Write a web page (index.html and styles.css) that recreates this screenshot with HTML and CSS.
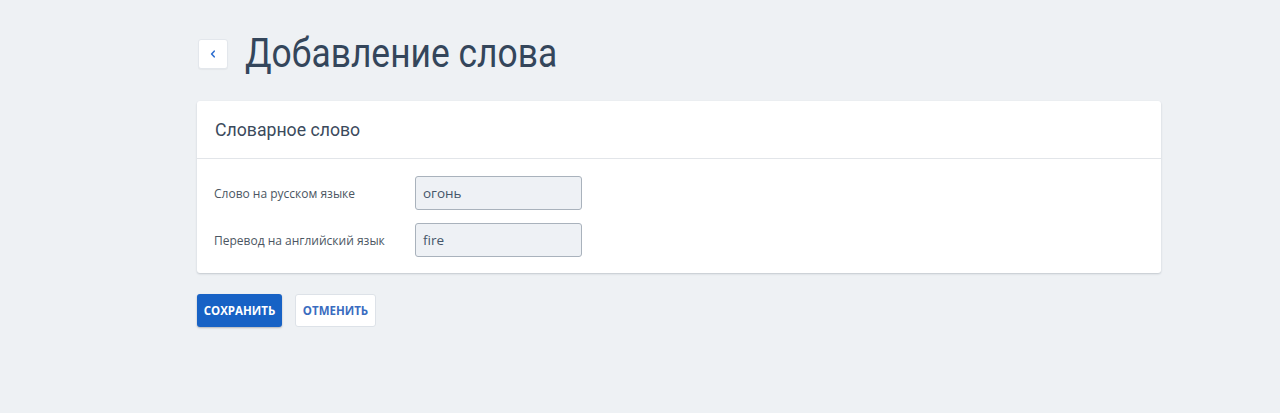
FILE: index.html
```html
<!DOCTYPE html>
<html lang="ru">
<head>
<meta charset="utf-8">
<title>Добавление слова</title>
<link rel="stylesheet" href="styles.css">
</head>
<body>
<div class="page">
  <div class="head">
    <button class="back" type="button" aria-label="Назад">
      <svg width="10" height="10" viewBox="0 0 10 10"><path d="M6.2 2.2 3.6 5l2.6 2.8" fill="none" stroke="#2f6fd0" stroke-width="1.6" stroke-linecap="round" stroke-linejoin="round"/></svg>
    </button>
    <h1 class="title"><span>Добавление слова</span></h1>
  </div>
  <div class="card">
    <div class="card-head"><span>Словарное слово</span></div>
    <div class="card-body">
      <div class="row">
        <label class="label">Слово на русском языке</label>
        <div class="input">огонь</div>
      </div>
      <div class="row">
        <label class="label">Перевод на английский язык</label>
        <div class="input">fire</div>
      </div>
    </div>
  </div>
  <div class="actions">
    <button class="btn primary" type="button">Сохранить</button>
    <button class="btn secondary" type="button">Отменить</button>
  </div>
</div>
</body>
</html>
```
FILE: styles.css
```css
html, body { margin: 0; padding: 0; }
body {
  background: #eef1f4;
  font-family: "Open Sans", "Liberation Sans", sans-serif;
  width: 1280px;
  height: 413px;
  overflow: hidden;
}
.page {
  width: 964px;
  margin-left: 197px;
  padding-top: 34px;
}
.head {
  display: flex;
  align-items: center;
  height: 40px;
}
.back {
  width: 30px;
  height: 30px;
  margin-left: 1px;
  padding: 0;
  border: 1px solid #e3e7ec;
  border-radius: 3px;
  background: #fff;
  display: flex;
  align-items: center;
  justify-content: center;
  box-shadow: 0 1px 1px rgba(0,0,0,0.04);
}
.title {
  margin: 0 0 0 17px;
  font-family: Roboto, "Liberation Sans", sans-serif;
  font-weight: 400;
  font-size: 40px;
  line-height: 40px;
  color: #34465b;
  white-space: nowrap;
}
.title span {
  display: inline-block;
  transform: scaleX(0.885);
  transform-origin: left center;
}
.card {
  margin-top: 27px;
  background: #fff;
  border-radius: 3px;
  box-shadow: 0 1px 2px rgba(40,55,75,0.22);
}
.card-head {
  height: 57px;
  border-bottom: 1px solid #e2e5e9;
  display: flex;
  align-items: center;
  padding-left: 18px;
  font-family: Roboto, "Liberation Sans", sans-serif;
  font-size: 19px;
  color: #3b4a5c;
}
.card-head span {
  display: inline-block;
  transform: scaleX(0.93);
  transform-origin: left center;
}
.card-body {
  padding: 17px 0 16px 17px;
  display: flex;
  flex-direction: column;
  gap: 13px;
}
.row {
  display: flex;
  align-items: center;
}
.label {
  width: 201px;
  font-size: 12px;
  color: #4b5662;
}
.input {
  box-sizing: border-box;
  width: 167px;
  height: 34px;
  padding: 0 4px 0 7px;
  background: #eef1f5;
  border: 1px solid #a9b2bc;
  border-radius: 3px;
  display: flex;
  align-items: center;
  font-size: 13.5px;
  color: #44566a;
}
.actions {
  display: flex;
  gap: 13px;
  margin-top: 21px;
}
.btn {
  height: 33px;
  padding: 0 6px;
  border-radius: 3px;
  font-family: "Open Sans", "Liberation Sans", sans-serif;
  font-size: 11.5px;
  font-weight: 700;
  text-transform: uppercase;
  cursor: pointer;
}
.primary {
  width: 85px;
  background: #1762c5;
  color: #fff;
  border: none;
  box-shadow: 0 1px 2px rgba(0,0,0,0.25);
}
.secondary {
  width: 81px;
  background: #fff;
  color: #3a6cc0;
  border: 1px solid #dde2e8;
}
```
